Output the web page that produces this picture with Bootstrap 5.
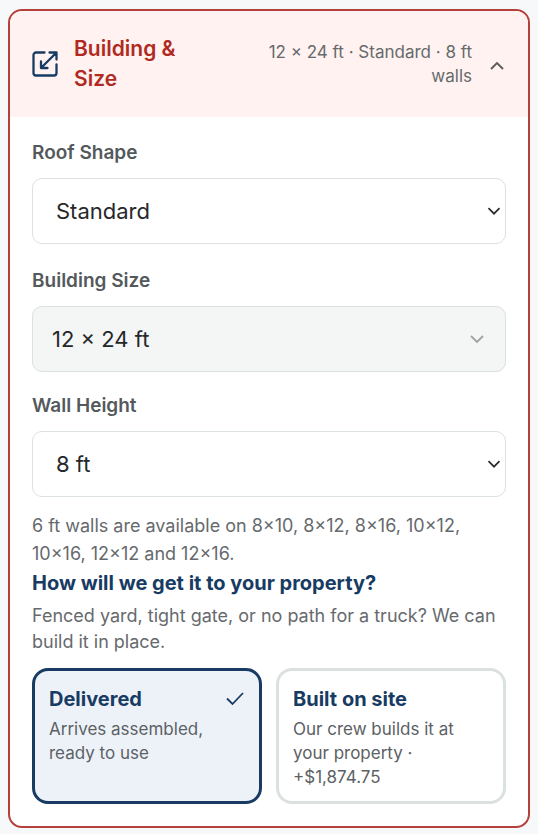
<!DOCTYPE html>
<html lang="en">
<head>
<meta charset="utf-8">
<meta name="viewport" content="width=device-width, initial-scale=1">
<title>Building &amp; Size</title>
<link href="https://cdn.jsdelivr.net/npm/bootstrap@5.3.0/dist/css/bootstrap.min.css" rel="stylesheet">
<style>
  :root { --navy: #173b63; --brick: #b12a22; --line: #dbe0e0; --muted-ink: #666a6d; }
  body { background: #f6f8f9; font-family: Inter, "Liberation Sans", sans-serif; color: #25282b; padding: 9px 8px 6px; }
  .panel { border: 2px solid #b5403b; border-radius: 14px; background: #fff; }
  .panel-toggle { background: #fff2f0; border: 0; padding: 23px 22px; gap: 16px; }
  .panel-title { color: var(--brick); font-size: 21px; line-height: 30px; font-weight: 600; flex: 0 1 122px; }
  .panel-summary { color: var(--muted-ink); font-size: 17px; line-height: 24px; }
  .panel-content { padding: 22px; }
  .field-label { color: #54595c; font-size: 19px; line-height: 28px; font-weight: 600; margin-bottom: 11px; }
  .field-gap { margin-bottom: 23px; }
  .field-box { height: 66px; border: 1px solid var(--line); border-radius: 10px; font-size: 22px; line-height: 32px; color: #25282b; }
  select.field-box { padding: 0 40px 0 23px;
    background-image: url("data:image/svg+xml,%3Csvg xmlns='http://www.w3.org/2000/svg' viewBox='0 0 14 14'%3E%3Cpath d='M1.5 4.2 7 9.7l5.5-5.5' fill='none' stroke='%232b2b2b' stroke-width='1.7'/%3E%3C/svg%3E");
    background-position: right 4px center; background-size: 14px 14px; }
  button.field-box { background: #f4f5f5; padding: 0 19px; }
  .help-text { color: var(--muted-ink); font-size: 18px; line-height: 28px; margin: 15px 0 0; }
  .question { color: var(--navy); font-size: 20px; line-height: 28px; font-weight: 700; margin: 1px 0 6px; }
  .question-note { color: var(--muted-ink); font-size: 18px; line-height: 26px; margin-bottom: 13px; }
  .choices { gap: 14px; }
  .choice { flex: 1 1 0; border: 3px solid var(--line); border-radius: 16px; background: #fff; padding: 14px 14px 12px; cursor: pointer; }
  .btn-check:checked + .choice { border-color: var(--navy); background: #edf2f9; }
  .choice-title { color: var(--navy); font-size: 20px; line-height: 28px; font-weight: 700; margin-bottom: 4px; }
  .choice-note { color: #5c6165; font-size: 17px; line-height: 24px; }
  .tick { display: none; }
  .btn-check:checked + .choice .tick { display: block; }
</style>
<script defer src="https://cdn.jsdelivr.net/npm/bootstrap@5.3.0/dist/js/bootstrap.bundle.min.js"></script>
</head>
<body>
<main class="panel overflow-hidden">
  <button class="panel-toggle d-flex align-items-center w-100" type="button" data-bs-toggle="collapse" data-bs-target="#sizePanel" aria-expanded="true" aria-controls="sizePanel">
    <svg class="flex-shrink-0" width="26" height="26" viewBox="0 0 26 26" fill="none" stroke="#173b63" stroke-width="2.3" stroke-linecap="round" stroke-linejoin="round" aria-hidden="true">
      <path d="M12.500 1.500H4A2.500 2.500 0 0 0 1.500 4v18A2.500 2.500 0 0 0 4 24.500h18a2.500 2.500 0 0 0 2.500-2.500V13.500M17.500 1.500h7v7M24 2 9.500 16.500M9 10.500V17h6.500"/>
    </svg>
    <span class="panel-title text-start">Building &amp; Size</span>
    <span class="panel-summary flex-fill text-end ms-5">12 × 24 ft · Standard · 8 ft walls</span>
    <svg class="flex-shrink-0 mt-1" width="18" height="18" viewBox="0 0 18 18" fill="none" stroke="#5c5c5c" stroke-width="1.9" aria-hidden="true"><path d="m3 12 6-6 6 6"/></svg>
  </button>
  <div id="sizePanel" class="collapse show">
    <form class="panel-content">
      <div class="field-gap">
        <label class="field-label d-block" for="roof">Roof Shape</label>
        <select class="field-box form-select" id="roof"><option>Standard</option></select>
      </div>
      <div class="mb-3 pb-1">
        <label class="field-label d-block" for="size">Building Size</label>
        <button class="field-box w-100 d-flex align-items-center justify-content-between" id="size" type="button">
          12 × 24 ft
          <svg width="18" height="18" viewBox="0 0 18 18" fill="none" stroke="#a3a3a3" stroke-width="1.9" aria-hidden="true"><path d="m3 6 6 6 6-6"/></svg>
        </button>
      </div>
      <label class="field-label d-block" for="wall">Wall Height</label>
      <select class="field-box form-select" id="wall" aria-describedby="wallHelp"><option>8 ft</option></select>
      <p class="help-text" id="wallHelp">6 ft walls are available on 8×10, 8×12, 8×16, 10×12, 10×16, 12×12 and 12×16.</p>
      <h2 class="question" id="question">How will we get it to your property?</h2>
      <p class="question-note">Fenced yard, tight gate, or no path for a truck? We can build it in place.</p>
      <div class="choices d-flex" role="radiogroup" aria-labelledby="question">
        <input class="btn-check" type="radio" name="delivery" id="delivered" checked>
        <label class="choice" for="delivered">
          <span class="choice-title d-flex align-items-center justify-content-between">Delivered
            <svg class="tick" width="20" height="20" viewBox="0 0 20 20" fill="none" stroke="#173b63" stroke-width="1.8" aria-hidden="true"><path d="m2 9.500 5.500 5.500L18 4"/></svg>
          </span>
          <span class="choice-note d-block">Arrives assembled, ready to use</span>
        </label>
        <input class="btn-check" type="radio" name="delivery" id="onsite">
        <label class="choice" for="onsite">
          <span class="choice-title d-block">Built on site</span>
          <span class="choice-note d-block">Our crew builds it at your property · +$1,874.75</span>
        </label>
      </div>
    </form>
  </div>
</main>
</body>
</html>
